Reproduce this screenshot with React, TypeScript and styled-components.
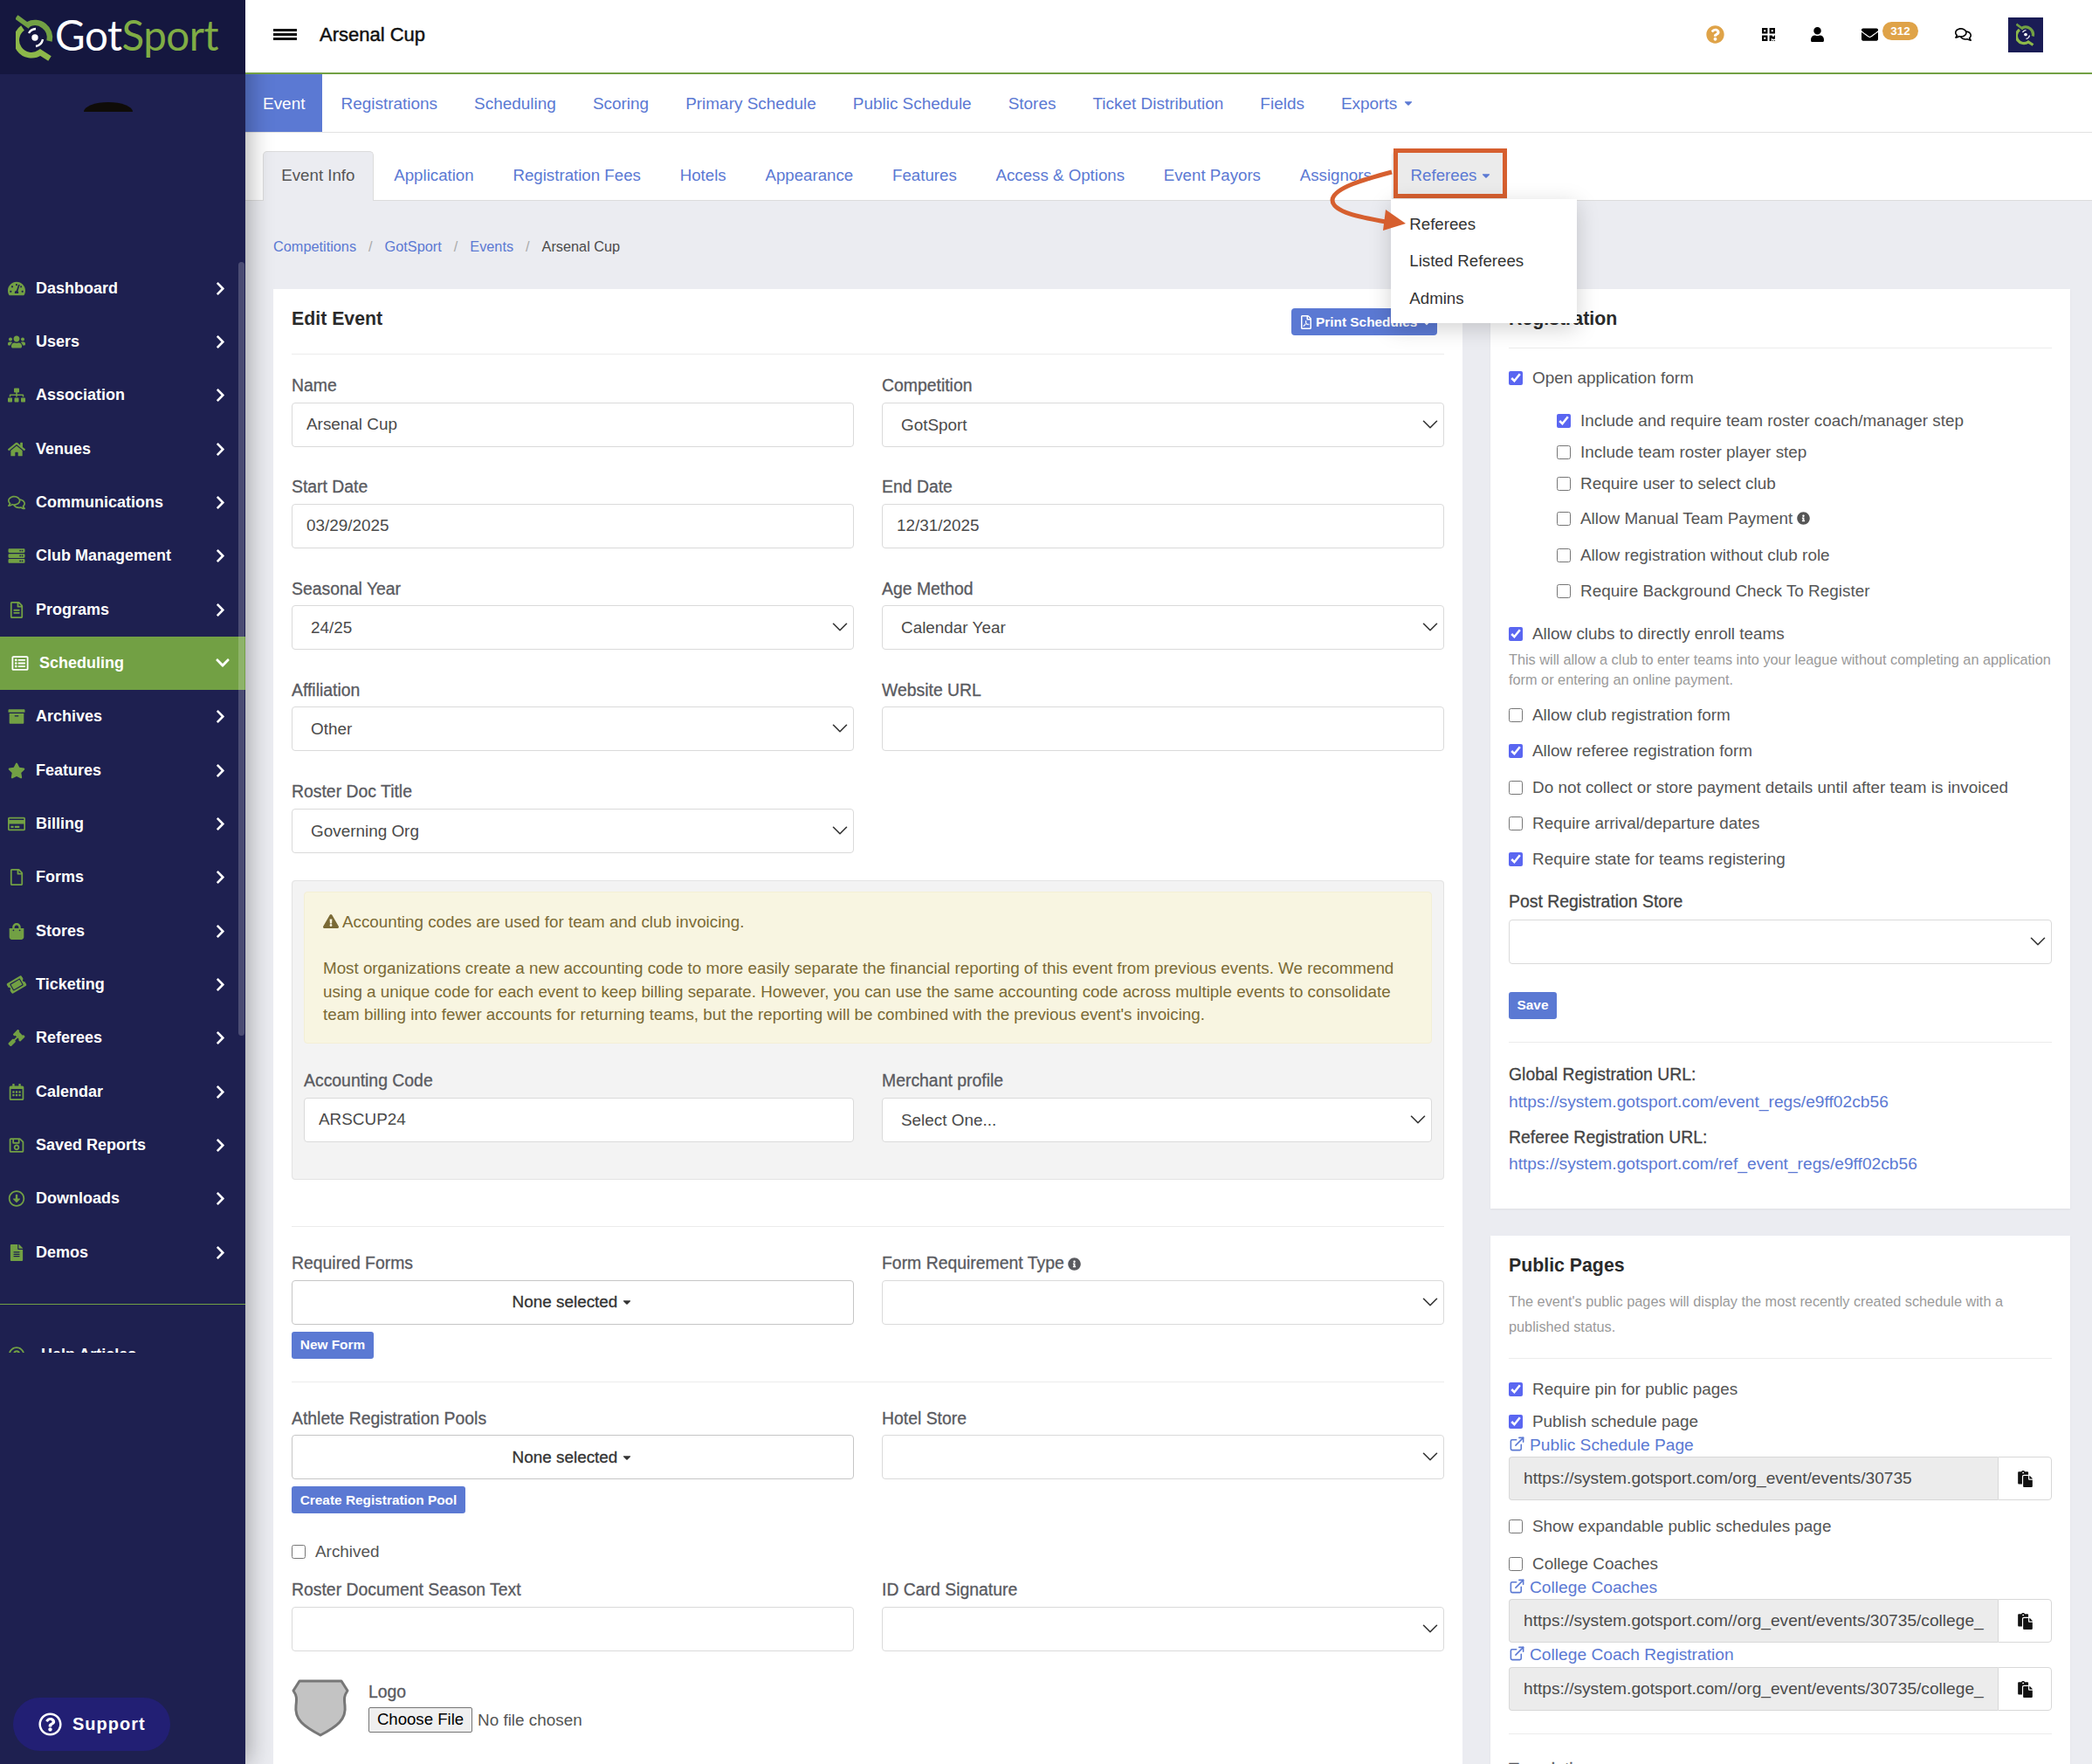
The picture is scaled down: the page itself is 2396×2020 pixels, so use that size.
import React from "react";
import styled, { createGlobalStyle, css } from "styled-components";
import {
  FaTachometerAlt,
  FaUsers,
  FaSitemap,
  FaHome,
  FaRegComments,
  FaServer,
  FaRegFileAlt,
  FaRegListAlt,
  FaArchive,
  FaStar,
  FaRegCreditCard,
  FaRegFile,
  FaShoppingBag,
  FaTicketAlt,
  FaGavel,
  FaRegCalendarAlt,
  FaRegSave,
  FaRegArrowAltCircleDown,
  FaFileAlt,
  FaChevronRight,
  FaChevronDown,
  FaQuestionCircle,
  FaRegQuestionCircle,
  FaQrcode,
  FaUser,
  FaEnvelope,
  FaCaretDown,
  FaRegFilePdf,
  FaExclamationTriangle,
  FaInfoCircle,
  FaPaste,
} from "react-icons/fa";
import { FiExternalLink, FiChevronDown } from "react-icons/fi";

const GlobalStyle = createGlobalStyle`
  html, body { margin: 0; padding: 0; background: #ebecf1; }
  * { box-sizing: border-box; }
  body {
    font-family: "Liberation Sans", Arial, sans-serif;
    font-size: 18.9px;
    line-height: 27px;
    color: #4a4a4a;
  }
  input, select, button { font-family: inherit; }
`;

const medium = css`
  -webkit-text-stroke: 0.3px currentColor;
`;

const LINK = "#5b79d3";
const GREEN = "#72a044";

// ---------------- Shell ----------------

const Page = styled.div`
  display: flex;
  width: 2396px;
  height: 2020px;
  overflow: hidden;
`;

const Main = styled.div`
  flex: 1;
  min-width: 0;
  display: flex;
  flex-direction: column;
`;

// ---------------- Sidebar ----------------

const Sidebar = styled.aside`
  position: relative;
  z-index: 2;
  flex: 0 0 281px;
  background: #1e2050;
  box-shadow: 4px 0 26px rgba(0, 0, 0, 0.32);
`;

const LogoBar = styled.div`
  display: flex;
  align-items: center;
  height: 85px;
  padding-left: 18px;
  gap: 1px;
  background: #15173f;
`;

const LogoText = styled.span`
  font-family: Lato, sans-serif;
  font-weight: 400;
  font-size: 47.5px;
  line-height: 60px;
  letter-spacing: -0.5px;
  color: #fff;
  margin-top: -5px;
  span {
    color: #80ad45;
  }
`;

const Profile = styled.div`
  height: 214.5px;
  padding: 32px 0 0 96px;
`;

const AvatarDome = styled.div`
  width: 56px;
  height: 11px;
  background: #0f0c08;
  border-radius: 28px 28px 0 0 / 11px 11px 0 0;
`;

const MenuScroll = styled.div`
  height: 1249.5px;
  overflow: hidden;
`;

const MenuItem = styled.div<{ $active?: boolean }>`
  display: flex;
  align-items: center;
  height: 61.33px;
  padding-left: ${({ $active }) => ($active ? "13px" : "9px")};
  padding-right: ${({ $active }) => ($active ? "17px" : "20px")};
  background: ${({ $active }) => ($active ? GREEN : "transparent")};
  color: #fff;
  font-weight: 700;
  font-size: 18px;
  > svg:first-child {
    flex: 0 0 20px;
    font-size: 19px;
    color: ${({ $active }) => ($active ? "#fff" : GREEN)};
  }
`;

const MenuLabel = styled.span`
  flex: 1;
  margin-left: 12px;
`;

const MenuDivider = styled.div`
  height: 1px;
  background: ${GREEN};
  margin: 28px 0 28px;
`;

const HelpItem = styled(MenuItem)`
  height: 60px;
  ${MenuLabel} {
    margin-left: 18px;
  }
`;

const TicketIcon = styled(FaTicketAlt)`
  transform: rotate(-30deg);
`;

const ScrollThumb = styled.div`
  position: absolute;
  left: 273px;
  top: 300px;
  width: 7px;
  height: 886px;
  border-radius: 4px;
  background: rgba(255, 255, 255, 0.2);
`;

const SupportButton = styled.div`
  position: absolute;
  left: 15px;
  bottom: 15px;
  width: 180px;
  height: 61px;
  display: flex;
  align-items: center;
  gap: 12px;
  padding-left: 29px;
  border-radius: 31px;
  background: #221f74;
  color: #fff;
  font-size: 20px;
  font-weight: 700;
  letter-spacing: 1px;
  svg {
    font-size: 27px;
  }
`;

// ---------------- Top bar ----------------

const TopBar = styled.header`
  position: relative;
  z-index: 3;
  flex: 0 0 85px;
  display: flex;
  align-items: center;
  padding: 0 56px 4px 32px;
  background: #fff;
  border-bottom: 2px solid ${GREEN};
`;

const Burger = styled.div`
  width: 27px;
  height: 13px;
  border-top: 3px solid #111;
  border-bottom: 3px solid #111;
  position: relative;
  &::after {
    content: "";
    position: absolute;
    left: 0;
    right: 0;
    top: 2px;
    height: 3px;
    background: #111;
  }
`;

const EventName = styled.h1`
  margin: 0 0 0 26px;
  font-size: 22px;
  font-weight: 400;
  color: #111;
  -webkit-text-stroke: 0.45px currentColor;
`;

const TopIcons = styled.div`
  margin-left: auto;
  display: flex;
  align-items: center;
  gap: 42px;
  color: #000;
  font-size: 17px;
`;

const HelpIcon = styled(FaQuestionCircle)`
  font-size: 21px;
  color: #dfa348;
`;

const UserIcon = styled(FaUser)`
  margin-left: -3px;
`;

const MailGroup = styled.div`
  display: flex;
  align-items: center;
  gap: 5px;
`;

const MailBadge = styled.span`
  width: 41px;
  height: 21px;
  margin-bottom: 9px;
  border-radius: 11px;
  background: #dfa348;
  color: #fff;
  font-size: 13.5px;
  font-weight: 700;
  line-height: 21px;
  text-align: center;
`;

const AccountTile = styled.div`
  width: 40px;
  height: 40px;
  display: flex;
  align-items: center;
  justify-content: center;
  background: #1a1c55;
`;

// ---------------- Tabs ----------------

const PrimaryNav = styled.nav`
  flex: 0 0 67px;
  display: flex;
  background: #fff;
  border-bottom: 1px solid #e2e2e2;
  font-size: 18.97px;
`;

const PrimaryTab = styled.a<{ $active?: boolean }>`
  display: flex;
  align-items: center;
  gap: 6px;
  padding: 0 21px;
  color: ${({ $active }) => ($active ? "#fff" : LINK)};
  background: ${({ $active }) => ($active ? LINK : "transparent")};
  ${({ $active }) => $active && "padding: 0 20px;"}
  svg {
    font-size: 14px;
  }
`;

const SecondaryNav = styled.nav`
  position: relative;
  z-index: 1;
  flex: 0 0 78px;
  display: flex;
  align-items: flex-end;
  padding-left: 20px;
  background: #fff;
  border-bottom: 1px solid #dcdcdc;
  font-size: 18.7px;
`;

const SecondaryTab = styled.a<{ $active?: boolean }>`
  position: relative;
  display: flex;
  align-items: center;
  gap: 7px;
  height: 57px;
  margin-bottom: -1px;
  margin-right: 2.2px;
  padding: 0 20.3px 3px;
  color: ${({ $active }) => ($active ? "#555" : LINK)};
  background: ${({ $active }) => ($active ? "#ebecf1" : "transparent")};
  border: 1px solid ${({ $active }) => ($active ? "#dcdcdc" : "transparent")};
  border-bottom: none;
  border-radius: 5px 5px 0 0;
  svg {
    font-size: 14px;
  }
`;

const OpenTab = styled(SecondaryTab)`
  width: 132px;
  gap: 4px;
  padding-right: 0;
  margin-left: 0;
  margin-right: 0;
  background: #ebebeb;
`;

const Highlight = styled.div`
  position: absolute;
  left: 1px;
  top: -4px;
  width: 130px;
  height: 57px;
  border: 5px solid #d65f2f;
`;

const ArrowMark = styled.svg`
  position: absolute;
  left: -76px;
  top: 15px;
  z-index: 6;
  pointer-events: none;
`;

const DropMenu = styled.div`
  position: absolute;
  z-index: 5;
  left: -2px;
  top: 54px;
  width: 213px;
  padding: 7px 0;
  background: #fff;
  box-shadow: 0 6px 24px rgba(0, 0, 0, 0.18);
`;

const DropItem = styled.div`
  height: 42.6px;
  padding: 0 21px;
  display: flex;
  align-items: center;
  color: #333;
`;

// ---------------- Content ----------------

const Content = styled.main`
  flex: 1;
  padding: 41px 25px 0 32px;
  background: #ebecf1;
`;

const Crumbs = styled.div`
  display: flex;
  height: 23px;
  margin-bottom: 37px;
  font-size: 16.3px;
  line-height: 23px;
`;

const Crumb = styled.a<{ $current?: boolean }>`
  color: ${({ $current }) => ($current ? "#4a4a4a" : LINK)};
`;

const CrumbSep = styled.span`
  color: #aaa;
  padding: 0 14px 0 14px;
`;

const Columns = styled.div`
  display: flex;
  gap: 32px;
  align-items: flex-start;
`;

const LeftCard = styled.section`
  flex: 0 0 1362px;
  height: 1700px;
  padding: 0 21px;
  background: #fff;
`;

const RightColumn = styled.div`
  flex: 1;
  display: flex;
  flex-direction: column;
  gap: 31px;
`;

const RightCard = styled.section<{ $bottom?: number }>`
  padding: 0 21px ${({ $bottom }) => $bottom ?? 0}px;
  background: #fff;
  box-shadow: 0 1px 2px rgba(0, 0, 0, 0.06);
`;

const CardHead = styled.div<{ $height: number }>`
  display: flex;
  justify-content: space-between;
  align-items: flex-start;
  height: ${({ $height }) => $height}px;
  padding-top: 20px;
  border-bottom: 1px solid #ececec;
`;

const CardTitle = styled.h2<{ $top?: number }>`
  margin: ${({ $top }) => $top ?? 0}px 0 0;
  font-size: 21.3px;
  font-weight: 700;
  line-height: 28px;
  color: #2a2a2a;
`;

const PrintButton = styled.button`
  display: flex;
  align-items: center;
  gap: 3px;
  margin: 2px 8px 0 0;
  width: 167px;
  height: 31px;
  padding: 0 9px;
  border: none;
  border-radius: 4px;
  background: ${LINK};
  color: #fff;
  font-size: 15.4px;
  font-weight: 700;
  white-space: nowrap;
  svg {
    flex: none;
    font-size: 16px;
  }
`;

const FieldRow = styled.div<{ $top?: number; $bottom?: number }>`
  display: grid;
  grid-template-columns: 644px 1fr;
  column-gap: 32px;
  margin-top: ${({ $top }) => $top ?? 0}px;
  margin-bottom: ${({ $bottom }) => $bottom ?? 31.75}px;
`;

const Label = styled.label`
  display: block;
  height: 27px;
  margin-bottom: 6.5px;
  font-size: 19.4px;
  line-height: 28px;
  color: #595a5f;
  ${medium}
  svg {
    font-size: 15px;
    vertical-align: -1.5px;
    margin-left: 4px;
  }
`;

const control = css`
  display: block;
  width: 100%;
  height: 51px;
  background: #fff;
  border: 1px solid #dadada;
  border-radius: 4px;
  font-size: 18.9px;
  color: #4a4a4a;
  outline: none;
`;

const TextInput = styled.input`
  ${control}
  padding: 0 16px;
`;

const SelectWrap = styled.div`
  position: relative;
  svg {
    position: absolute;
    right: 1px;
    top: 10px;
    font-size: 30px;
    color: #333;
    stroke-width: 1.3;
    pointer-events: none;
  }
`;

const SelectBox = styled.select`
  ${control}
  appearance: none;
  padding: 0 40px 0 21px;
`;

const MultiButton = styled.button`
  ${control}
  border-color: #c6c6c6;
  color: #333;
  ${medium}
  svg {
    font-size: 14px;
    margin-left: 4px;
    vertical-align: -1px;
  }
`;

const SmallButton = styled.button<{ $width: number; $top?: number }>`
  display: block;
  margin-top: ${({ $top }) => $top ?? 8}px;
  width: ${({ $width }) => $width}px;
  height: 31px;
  padding: 0;
  border: none;
  border-radius: 3px;
  background: ${LINK};
  color: #fff;
  font-size: 15.4px;
  font-weight: 700;
  white-space: nowrap;
`;

const Panel = styled.fieldset`
  margin: 0 0 53px;
  padding: 12px 13px 42.5px;
  background: #f3f3f3;
  border: 1px solid #e3e3e3;
  border-radius: 4px;
`;

const Alert = styled.div`
  padding: 21px 21px 0;
  height: 174px;
  margin-bottom: 28px;
  background: #f8f5e1;
  border: 1px solid #f3efd5;
  border-radius: 4px;
  color: #7a6a35;
  font-size: 18.8px;
  line-height: 26.5px;
  p {
    margin: 0 0 26.5px;
  }
  svg {
    font-size: 18px;
    vertical-align: -2px;
    margin-right: 4px;
  }
`;

const PanelRow = styled.div`
  display: grid;
  grid-template-columns: 630px 1fr;
  column-gap: 32px;
`;

const Divider = styled.hr<{ $top?: number; $bottom?: number }>`
  margin: ${({ $top }) => $top ?? 0}px 0 ${({ $bottom }) => $bottom ?? 0}px;
  border: none;
  border-top: 1px solid #ececec;
`;

const CheckRow = styled.label<{ $top?: number; $indent?: boolean }>`
  display: flex;
  align-items: center;
  gap: 11px;
  height: 27px;
  margin-top: ${({ $top }) => $top ?? 0}px;
  margin-left: ${({ $indent }) => ($indent ? "55px" : "0")};
  color: #555;
  svg {
    font-size: 15px;
    margin-left: -6px;
  }
`;

const Check = styled.input.attrs({ type: "checkbox" })`
  flex: none;
  width: 16px;
  height: 16px;
  margin: 0;
  accent-color: #5a66f1;
`;

const HelpText = styled.p<{ $top: number; $line: number }>`
  margin: ${({ $top }) => $top}px 0 0;
  font-size: 16.3px;
  line-height: ${({ $line }) => $line}px;
  color: #9a9a9a;
`;

const SideLabel = styled(Label)<{ $top: number; $bottom?: number }>`
  margin-top: ${({ $top }) => $top}px;
  margin-bottom: ${({ $bottom }) => $bottom ?? 0}px;
  color: #444;
`;

const UrlLink = styled.a<{ $top?: number }>`
  display: block;
  margin-top: ${({ $top }) => $top ?? 0}px;
  color: ${LINK};
  font-size: 19.2px;
  height: 27px;
  svg {
    font-size: 19px;
    vertical-align: -2px;
    margin-right: 5px;
  }
`;

const UrlGroup = styled.div<{ $top?: number }>`
  display: flex;
  height: 50px;
  margin-top: ${({ $top }) => $top ?? 0}px;
`;

const UrlInput = styled.input`
  flex: 1;
  min-width: 0;
  height: 50px;
  padding: 0 14px 0 16px;
  background: #ececec;
  border: 1px solid #d8d8d8;
  border-right: none;
  border-radius: 4px 0 0 4px;
  font-size: 19.15px;
  color: #4a4a4a;
  outline: none;
`;

const CopyButton = styled.button`
  flex: 0 0 62px;
  padding: 0;
  background: #fff;
  border: 1px solid #d8d8d8;
  border-radius: 0 4px 4px 0;
  color: #111;
  font-size: 19px;
  line-height: 0;
`;

const LogoRow = styled.div`
  display: flex;
  gap: 22px;
`;

const LogoLabel = styled(Label)`
  margin-bottom: 5px;
`;

const FileInput = styled.input.attrs({ type: "file" })`
  display: block;
  font-size: 18.9px;
  color: #555;
  &::file-selector-button {
    height: 29px;
    width: 119px;
    padding: 0;
    margin-right: 6px;
    font-size: 18.6px;
    color: #000;
    background: #efefef;
    border: 1px solid #767676;
    border-radius: 2px;
  }
`;

const SectionLabel = styled(Label)`
  margin-top: 26px;
`;

// ---------------- Little drawings ----------------

const LogoMark = ({ size, height }: { size: number; height: number }) => (
  <svg width={size} height={height} viewBox="0 0 44 54" fill="none">
    <path d="M3 5 L14 13" stroke="#72a044" strokeWidth="5.5" strokeLinecap="square" />
    <path d="M14 12 A17 17 0 0 1 38.5 31" stroke="#72a044" strokeWidth="6.5" />
    <path d="M8 16 A17 17 0 0 0 28 44 L39 51" stroke="#8db84a" strokeWidth="6.5" />
    <path d="M15 22 A10 10 0 0 1 23 17" stroke="#fff" strokeWidth="2.4" />
    <path d="M31 29 A10 10 0 0 1 23 37" stroke="#fff" strokeWidth="2.4" />
    <circle cx="22" cy="27" r="3.7" fill="#fff" />
  </svg>
);

const Shield = () => (
  <svg width="66" height="66" viewBox="0 0 66 66">
    <path
      d="M9 2 H57 L64 13 C60 19 60 22 61 30 C63 46 52 54 33 64 C14 54 3 46 5 30 C6 22 6 19 2 13 Z"
      fill="#c3c3c3"
      stroke="#777"
      strokeWidth="3"
      strokeLinejoin="round"
    />
  </svg>
);

// ---------------- Data ----------------

const menu: { label: string; icon: React.ReactNode; active?: boolean }[] = [
  { label: "Dashboard", icon: <FaTachometerAlt /> },
  { label: "Users", icon: <FaUsers /> },
  { label: "Association", icon: <FaSitemap /> },
  { label: "Venues", icon: <FaHome /> },
  { label: "Communications", icon: <FaRegComments /> },
  { label: "Club Management", icon: <FaServer /> },
  { label: "Programs", icon: <FaRegFileAlt /> },
  { label: "Scheduling", icon: <FaRegListAlt />, active: true },
  { label: "Archives", icon: <FaArchive /> },
  { label: "Features", icon: <FaStar /> },
  { label: "Billing", icon: <FaRegCreditCard /> },
  { label: "Forms", icon: <FaRegFile /> },
  { label: "Stores", icon: <FaShoppingBag /> },
  { label: "Ticketing", icon: <TicketIcon /> },
  { label: "Referees", icon: <FaGavel /> },
  { label: "Calendar", icon: <FaRegCalendarAlt /> },
  { label: "Saved Reports", icon: <FaRegSave /> },
  { label: "Downloads", icon: <FaRegArrowAltCircleDown /> },
  { label: "Demos", icon: <FaFileAlt /> },
];

const primaryTabs = [
  "Registrations",
  "Scheduling",
  "Scoring",
  "Primary Schedule",
  "Public Schedule",
  "Stores",
  "Ticket Distribution",
  "Fields",
];

const secondaryTabs = [
  "Application",
  "Registration Fees",
  "Hotels",
  "Appearance",
  "Features",
  "Access & Options",
  "Event Payors",
  "Assignors",
];

const Field = ({ label, value }: { label: string; value?: string }) => (
  <div>
    <Label>{label}</Label>
    <TextInput readOnly value={value ?? ""} />
  </div>
);

const SelectControl = ({ value }: { value?: string }) => (
  <SelectWrap>
    <SelectBox value={value ?? ""} onChange={() => undefined}>
      <option value={value ?? ""}>{value ?? ""}</option>
    </SelectBox>
    <FiChevronDown />
  </SelectWrap>
);

const Picker = ({ label, value }: { label: React.ReactNode; value?: string }) => (
  <div>
    <Label>{label}</Label>
    <SelectControl value={value} />
  </div>
);

const Multi = ({ label, children }: { label: string; children: React.ReactNode }) => (
  <div>
    <Label>{label}</Label>
    <MultiButton>
      None selected
      <FaCaretDown />
    </MultiButton>
    {children}
  </div>
);

const Checkbox = ({
  on,
  top,
  indent,
  children,
}: {
  on?: boolean;
  top?: number;
  indent?: boolean;
  children: React.ReactNode;
}) => (
  <CheckRow $top={top} $indent={indent}>
    <Check defaultChecked={on} />
    <span>{children}</span>
  </CheckRow>
);

const CopyUrl = ({ url, top }: { url: string; top?: number }) => (
  <UrlGroup $top={top}>
    <UrlInput readOnly value={url} />
    <CopyButton>
      <FaPaste />
    </CopyButton>
  </UrlGroup>
);

// ---------------- Page ----------------

const App: React.FC = () => (
  <Page>
    <GlobalStyle />
    <Sidebar>
      <LogoBar>
        <LogoMark size={44} height={54} />
        <LogoText>
          Got<span>Sport</span>
        </LogoText>
      </LogoBar>
      <Profile>
        <AvatarDome />
      </Profile>
      <MenuScroll>
        {menu.map((m) => (
          <MenuItem key={m.label} $active={m.active}>
            {m.icon}
            <MenuLabel>{m.label}</MenuLabel>
            {m.active ? <FaChevronDown size={18} /> : <FaChevronRight size={17} />}
          </MenuItem>
        ))}
        <MenuDivider />
        <HelpItem>
          <FaRegQuestionCircle />
          <MenuLabel>Help Articles</MenuLabel>
        </HelpItem>
      </MenuScroll>
      <ScrollThumb />
      <SupportButton>
        <FaRegQuestionCircle />
        Support
      </SupportButton>
    </Sidebar>

    <Main>
      <TopBar>
        <Burger />
        <EventName>Arsenal Cup</EventName>
        <TopIcons>
          <HelpIcon />
          <FaQrcode />
          <UserIcon />
          <MailGroup>
            <FaEnvelope size={19} />
            <MailBadge>312</MailBadge>
          </MailGroup>
          <FaRegComments size={19} />
          <AccountTile>
            <LogoMark size={22} height={27} />
          </AccountTile>
        </TopIcons>
      </TopBar>

      <PrimaryNav>
        <PrimaryTab $active>Event</PrimaryTab>
        {primaryTabs.map((t) => (
          <PrimaryTab key={t}>{t}</PrimaryTab>
        ))}
        <PrimaryTab>
          Exports <FaCaretDown />
        </PrimaryTab>
      </PrimaryNav>

      <SecondaryNav>
        <SecondaryTab $active>Event Info</SecondaryTab>
        {secondaryTabs.map((t) => (
          <SecondaryTab key={t}>{t}</SecondaryTab>
        ))}
        <OpenTab>
          Referees <FaCaretDown />
          <Highlight />
          <ArrowMark width="100" height="85" viewBox="0 0 100 85" fill="none">
            <path
              d="M75 8 C45 16 8 26 7 40 C7 54 40 60 68 65"
              stroke="#d65f2f"
              strokeWidth="5"
            />
            <path d="M68 51 L91 67 L65 75 Z" fill="#d65f2f" />
          </ArrowMark>
          <DropMenu>
            <DropItem>Referees</DropItem>
            <DropItem>Listed Referees</DropItem>
            <DropItem>Admins</DropItem>
          </DropMenu>
        </OpenTab>
      </SecondaryNav>

      <Content>
        <Crumbs>
          <Crumb>Competitions</Crumb>
          <CrumbSep>/</CrumbSep>
          <Crumb>GotSport</Crumb>
          <CrumbSep>/</CrumbSep>
          <Crumb>Events</Crumb>
          <CrumbSep>/</CrumbSep>
          <Crumb $current>Arsenal Cup</Crumb>
        </Crumbs>

        <Columns>
          <LeftCard>
            <CardHead $height={75}>
              <CardTitle>Edit Event</CardTitle>
              <PrintButton>
                <FaRegFilePdf />
                Print Schedules
                <FaCaretDown />
              </PrintButton>
            </CardHead>

            <FieldRow $top={21}>
              <Field label="Name" value="Arsenal Cup" />
              <Picker label="Competition" value="GotSport" />
            </FieldRow>
            <FieldRow>
              <Field label="Start Date" value="03/29/2025" />
              <Field label="End Date" value="12/31/2025" />
            </FieldRow>
            <FieldRow>
              <Picker label="Seasonal Year" value="24/25" />
              <Picker label="Age Method" value="Calendar Year" />
            </FieldRow>
            <FieldRow>
              <Picker label="Affiliation" value="Other" />
              <Field label="Website URL" />
            </FieldRow>
            <FieldRow>
              <Picker label="Roster Doc Title" value="Governing Org" />
            </FieldRow>

            <Panel>
              <Alert>
                <p>
                  <FaExclamationTriangle />
                  Accounting codes are used for team and club invoicing.
                </p>
                Most organizations create a new accounting code to more easily separate the
                financial reporting of this event from previous events. We recommend using a
                unique code for each event to keep billing separate. However, you can use the
                same accounting code across multiple events to consolidate team billing into
                fewer accounts for returning teams, but the reporting will be combined with the
                previous event's invoicing.
              </Alert>
              <PanelRow>
                <Field label="Accounting Code" value="ARSCUP24" />
                <Picker label="Merchant profile" value="Select One..." />
              </PanelRow>
            </Panel>

            <Divider />

            <FieldRow $top={27} $bottom={26}>
              <Multi label="Required Forms">
                <SmallButton $width={94}>New Form</SmallButton>
              </Multi>
              <Picker
                label={
                  <>
                    Form Requirement Type
                    <FaInfoCircle />
                  </>
                }
              />
            </FieldRow>

            <Divider />

            <FieldRow $top={27} $bottom={30}>
              <Multi label="Athlete Registration Pools">
                <SmallButton $width={199}>Create Registration Pool</SmallButton>
              </Multi>
              <Picker label="Hotel Store" />
            </FieldRow>

            <Checkbox>Archived</Checkbox>

            <FieldRow $top={16}>
              <Field label="Roster Document Season Text" />
              <Picker label="ID Card Signature" />
            </FieldRow>

            <LogoRow>
              <Shield />
              <div>
                <LogoLabel>Logo</LogoLabel>
                <FileInput />
              </div>
            </LogoRow>
          </LeftCard>

          <RightColumn>
            <RightCard $bottom={38.5}>
              <CardHead $height={68}>
                <CardTitle>Registration</CardTitle>
              </CardHead>
              <Checkbox on top={20}>
                Open application form
              </Checkbox>
              <Checkbox on indent top={22}>
                Include and require team roster coach/manager step
              </Checkbox>
              <Checkbox indent top={9}>
                Include team roster player step
              </Checkbox>
              <Checkbox indent top={9}>
                Require user to select club
              </Checkbox>
              <CheckRow $indent $top={13}>
                <Check />
                <span>Allow Manual Team Payment</span>
                <FaInfoCircle />
              </CheckRow>
              <Checkbox indent top={15}>
                Allow registration without club role
              </Checkbox>
              <Checkbox indent top={14}>
                Require Background Check To Register
              </Checkbox>
              <Checkbox on top={22}>
                Allow clubs to directly enroll teams
              </Checkbox>
              <HelpText $top={5} $line={23}>
                This will allow a club to enter teams into your league without completing an
                application form or entering an online payment.
              </HelpText>
              <Checkbox top={15}>Allow club registration form</Checkbox>
              <Checkbox on top={14}>
                Allow referee registration form
              </Checkbox>
              <Checkbox top={15}>Do not collect or store payment details until after team is invoiced</Checkbox>
              <Checkbox top={14}>Require arrival/departure dates</Checkbox>
              <Checkbox on top={14}>
                Require state for teams registering
              </Checkbox>
              <SideLabel $top={21} $bottom={7.5}>
                Post Registration Store
              </SideLabel>
              <SelectControl />
              <SmallButton $width={55} $top={32}>
                Save
              </SmallButton>
              <Divider $top={26} />
              <SideLabel $top={22}>Global Registration URL:</SideLabel>
              <UrlLink $top={5}>https://system.gotsport.com/event_regs/e9ff02cb56</UrlLink>
              <SideLabel $top={13}>Referee Registration URL:</SideLabel>
              <UrlLink $top={4}>https://system.gotsport.com/ref_event_regs/e9ff02cb56</UrlLink>
            </RightCard>

            <RightCard>
              <CardTitle $top={20}>Public Pages</CardTitle>
              <HelpText $top={13} $line={29}>
                The event's public pages will display the most recently created schedule with a
                published status.
              </HelpText>
              <Divider $top={21} />
              <Checkbox on top={21}>
                Require pin for public pages
              </Checkbox>
              <Checkbox on top={10}>
                Publish schedule page
              </Checkbox>
              <UrlLink>
                <FiExternalLink />
                Public Schedule Page
              </UrlLink>
              <CopyUrl url="https://system.gotsport.com/org_event/events/30735" />
              <Checkbox top={16}>Show expandable public schedules page</Checkbox>
              <Checkbox top={16}>College Coaches</Checkbox>
              <UrlLink>
                <FiExternalLink />
                College Coaches
              </UrlLink>
              <CopyUrl url="https://system.gotsport.com//org_event/events/30735/college_" />
              <UrlLink>
                <FiExternalLink />
                College Coach Registration
              </UrlLink>
              <CopyUrl top={1} url="https://system.gotsport.com//org_event/events/30735/college_" />
              <Divider $top={26} />
              <SectionLabel>Translation</SectionLabel>
            </RightCard>
          </RightColumn>
        </Columns>
      </Content>
    </Main>
  </Page>
);

export default App;
